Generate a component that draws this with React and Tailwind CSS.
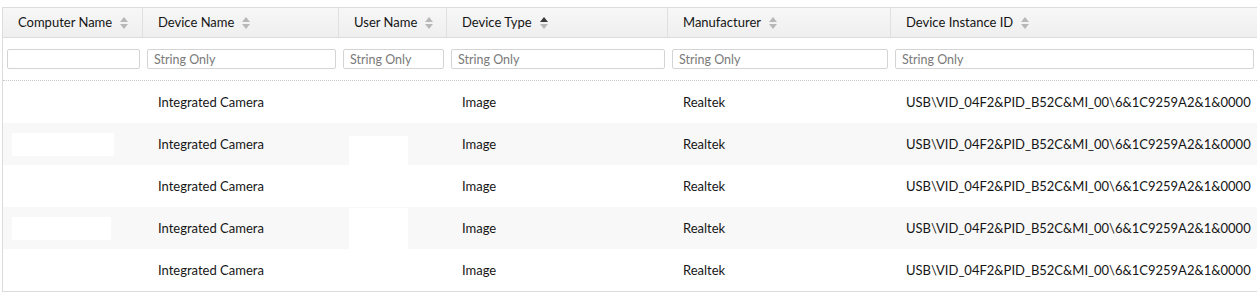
import React from "react";

const columns = [
  { key: "computer", label: "Computer Name", width: "w-[140px]", filter: "" },
  { key: "device", label: "Device Name", width: "w-[196px]", filter: "String Only" },
  { key: "user", label: "User Name", width: "w-[108px]", filter: "String Only" },
  { key: "type", label: "Device Type", width: "w-[221px]", filter: "String Only", sort: "asc" },
  { key: "maker", label: "Manufacturer", width: "w-[223px]", filter: "String Only" },
  { key: "instance", label: "Device Instance ID", width: "flex-1", filter: "String Only" },
];

const rows = Array.from({ length: 5 }, (_, i) => ({
  id: i,
  device: "Integrated Camera",
  type: "Image",
  maker: "Realtek",
  instance: "USB\\VID_04F2&PID_B52C&MI_00\\6&1C9259A2&1&0000",
}));

function SortIcon({ dir }) {
  return (
    <svg width="8" height="14" viewBox="0 0 8 14" className="ml-[8px] shrink-0">
      <path d="M0 6 L4 1 L8 6 Z" fill={dir === "asc" ? "#3a3a3a" : "#b8b8b8"} />
      <path d="M0 8 L4 13 L8 8 Z" fill="#b8b8b8" />
    </svg>
  );
}

function HeaderRow() {
  return (
    <div className="flex h-[31px] border-t border-b border-[#dcdcdc] bg-gradient-to-b from-[#f7f7f7] to-[#efefef]">
      {columns.map((col, i) => (
        <div
          key={col.key}
          className={`${col.width} flex items-center pl-[15px] ${
            i < columns.length - 1 ? "border-r border-[#e0e0e0]" : ""
          }`}
        >
          <span className="text-[13px] text-[#151515]">{col.label}</span>
          <SortIcon dir={col.sort} />
        </div>
      ))}
    </div>
  );
}

function FilterRow() {
  return (
    <div className="flex h-[43px] border-b border-dotted border-[#c8c8c8]">
      {columns.map((col) => (
        <div key={col.key} className={`${col.width} pl-[4px] pr-[3px] pt-[11px]`}>
          <input
            readOnly
            placeholder={col.filter}
            className="block h-[20px] w-full rounded-[2px] border border-[#d4d4d4] bg-white px-[6px] text-[12.5px] text-[#333] placeholder:text-[#7a7a7a] outline-none"
          />
        </div>
      ))}
    </div>
  );
}

function DataRow({ row, striped }) {
  return (
    <div className={`flex h-[42px] items-center pt-[1px] text-[13px] text-[#151515] ${striped ? "bg-[#f8f8f8]" : "bg-white"}`}>
      <div className="w-[140px] h-full flex items-center pl-[9px]">
        {striped && (
          <div className={`bg-white h-[23px] ${row.id === 1 ? "w-[102px]" : "w-[99px]"}`} />
        )}
      </div>
      <div className="w-[196px] pl-[15px]">{row.device}</div>
      <div className="w-[108px] h-full flex pl-[10px]">
        {striped && (
          <div className={`w-[59px] bg-white self-end ${row.id === 1 ? "h-[29px]" : "h-full"}`} />
        )}
      </div>
      <div className="w-[221px] pl-[15px]">{row.type}</div>
      <div className="w-[223px] pl-[15px]">{row.maker}</div>
      <div className="flex-1 pl-[15px] whitespace-nowrap">{row.instance}</div>
    </div>
  );
}

export default function App() {
  return (
    <div className="w-[1257px] h-[292px] overflow-hidden bg-white pt-[7px] pl-[2px] font-['Lato','Liberation_Sans',sans-serif]">
      <div className="border-l border-b border-[#dcdcdc]">
        <HeaderRow />
        <FilterRow />
        {rows.map((row, i) => (
          <DataRow key={row.id} row={row} striped={i % 2 === 1} />
        ))}
      </div>
    </div>
  );
}
